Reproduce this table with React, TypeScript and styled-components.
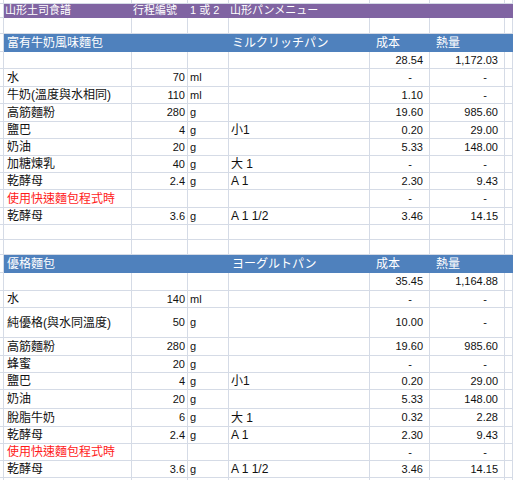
import React from 'react';
import styled, { createGlobalStyle } from 'styled-components';

const GRID = '#D5DBE6';
const PURPLE = '#8064A2';
const BLUE = '#4F81BD';

const Global = createGlobalStyle`
  html, body { margin: 0; padding: 0; background: #fff; }
  body {
    font-family: "Liberation Sans", "Noto Sans CJK TC", sans-serif;
    color: #111;
    overflow: hidden;
  }
`;

type Variant = 'plain' | 'purple' | 'blue';

const Sheet = styled.div`
  width: 513px;
  height: 480px;
  overflow: hidden;
  display: flex;
  flex-direction: column;
`;

const Row = styled.div<{ $h: number; $variant: Variant }>`
  display: grid;
  grid-template-columns: 4px 128px 56px 41px 141px 60px 75px 1fr;
  height: ${(p) => p.$h}px;
  flex: none;
  background: ${(p) => (p.$variant === 'purple' ? PURPLE : p.$variant === 'blue' ? BLUE : '#fff')};
  color: ${(p) => (p.$variant === 'plain' ? '#111' : '#fff')};
  --line: ${(p) => (p.$variant === 'plain' ? GRID : 'transparent')};
  font-size: ${(p) => (p.$variant === 'purple' ? 11 : 12)}px;
`;

const Gutter = styled.div`
  box-sizing: border-box;
  background: #fff;
  border-right: 1px solid ${GRID};
  border-bottom: 1px solid ${GRID};
`;

const Cell = styled.div<{ $align?: 'left' | 'right'; $pl?: number; $pr?: number; $num?: boolean; $red?: boolean }>`
  box-sizing: border-box;
  border-right: 1px solid var(--line);
  border-bottom: 1px solid var(--line);
  display: flex;
  align-items: center;
  justify-content: ${(p) => (p.$align === 'right' ? 'flex-end' : 'flex-start')};
  padding-left: ${(p) => p.$pl ?? 0}px;
  padding-right: ${(p) => p.$pr ?? 0}px;
  white-space: nowrap;
  overflow: visible;
  font-size: ${(p) => (p.$num ? '11px' : 'inherit')};
  color: ${(p) => (p.$red ? '#FF1A1A' : 'inherit')};
  line-height: 1;
`;

const Dash = styled.span`
  margin-right: 11px;
`;

type RowData = {
  h: number;
  v?: Variant;
  c?: string[];
  red?: boolean;
};

const rows: RowData[] = [
  { h: 4 },
  { h: 14, v: 'purple', c: ['山形土司食譜', '行程編號', '1 或 2', '山形パンメニュー', '', ''] },
  { h: 16 },
  { h: 18, v: 'blue', c: ['富有牛奶風味麵包', '', '', 'ミルクリッチパン', '成本', '熱量'] },
  { h: 17, c: ['', '', '', '', '28.54', '1,172.03'] },
  { h: 18, c: ['水', '70', 'ml', '', '-', '-'] },
  { h: 17, c: ['牛奶(溫度與水相同)', '110', 'ml', '', '1.10', '-'] },
  { h: 18, c: ['高筋麵粉', '280', 'g', '', '19.60', '985.60'] },
  { h: 17, c: ['鹽巴', '4', 'g', '小1', '0.20', '29.00'] },
  { h: 17, c: ['奶油', '20', 'g', '', '5.33', '148.00'] },
  { h: 17, c: ['加糖煉乳', '40', 'g', '大 1', '-', '-'] },
  { h: 17, c: ['乾酵母', '2.4', 'g', 'A 1', '2.30', '9.43'] },
  { h: 18, c: ['使用快速麵包程式時', '', '', '', '-', '-'], red: true },
  { h: 17, c: ['乾酵母', '3.6', 'g', 'A 1 1/2', '3.46', '14.15'] },
  { h: 15 },
  { h: 15 },
  { h: 18, v: 'blue', c: ['優格麵包', '', '', 'ヨーグルトパン', '成本', '熱量'] },
  { h: 18, c: ['', '', '', '', '35.45', '1,164.88'] },
  { h: 17, c: ['水', '140', 'ml', '', '-', '-'] },
  { h: 30, c: ['純優格(與水同溫度)', '50', 'g', '', '10.00', '-'] },
  { h: 18, c: ['高筋麵粉', '280', 'g', '', '19.60', '985.60'] },
  { h: 17, c: ['蜂蜜', '20', 'g', '', '-', '-'] },
  { h: 17, c: ['鹽巴', '4', 'g', '小1', '0.20', '29.00'] },
  { h: 19, c: ['奶油', '20', 'g', '', '5.33', '148.00'] },
  { h: 18, c: ['脫脂牛奶', '6', 'g', '大 1', '0.32', '2.28'] },
  { h: 17, c: ['乾酵母', '2.4', 'g', 'A 1', '2.30', '9.43'] },
  { h: 17, c: ['使用快速麵包程式時', '', '', '', '-', '-'], red: true },
  { h: 17, c: ['乾酵母', '3.6', 'g', 'A 1 1/2', '3.46', '14.15'] },
  { h: 10 },
];

const NumValue: React.FC<{ value: string }> = ({ value }) =>
  value === '-' ? <Dash>-</Dash> : <span>{value}</span>;

const SheetRow: React.FC<{ row: RowData }> = ({ row }) => {
  const v = row.v ?? 'plain';
  const c = row.c ?? ['', '', '', '', '', ''];
  if (v === 'purple') {
    return (
      <Row $h={row.h} $variant={v}>
        <Gutter />
        <Cell $pl={1}>{c[0]}</Cell>
        <Cell $pl={1}>{c[1]}</Cell>
        <Cell $pl={2}>{c[2]}</Cell>
        <Cell $pl={1}>{c[3]}</Cell>
        <Cell $pl={6}>{c[4]}</Cell>
        <Cell $pl={6}>{c[5]}</Cell>
        <Cell />
      </Row>
    );
  }
  if (v === 'blue') {
    return (
      <Row $h={row.h} $variant={v}>
        <Gutter />
        <Cell $pl={3}>{c[0]}</Cell>
        <Cell />
        <Cell />
        <Cell $pl={3}>{c[3]}</Cell>
        <Cell $pl={6}>{c[4]}</Cell>
        <Cell $pl={6}>{c[5]}</Cell>
        <Cell />
      </Row>
    );
  }
  return (
    <Row $h={row.h} $variant={v}>
      <Gutter />
      <Cell $pl={3} $red={row.red}>{c[0]}</Cell>
      <Cell $align="right" $pr={2} $num>{c[1]}</Cell>
      <Cell $pl={2} $num>{c[2]}</Cell>
      <Cell $pl={2}>{c[3]}</Cell>
      <Cell $align="right" $pr={6} $num>{c[4] && <NumValue value={c[4]} />}</Cell>
      <Cell $align="right" $pr={6} $num>{c[5] && <NumValue value={c[5]} />}</Cell>
      <Cell />
    </Row>
  );
};

export default function App() {
  return (
    <>
      <Global />
      <Sheet>
        {rows.map((r, i) => (
          <SheetRow key={i} row={r} />
        ))}
      </Sheet>
    </>
  );
}
